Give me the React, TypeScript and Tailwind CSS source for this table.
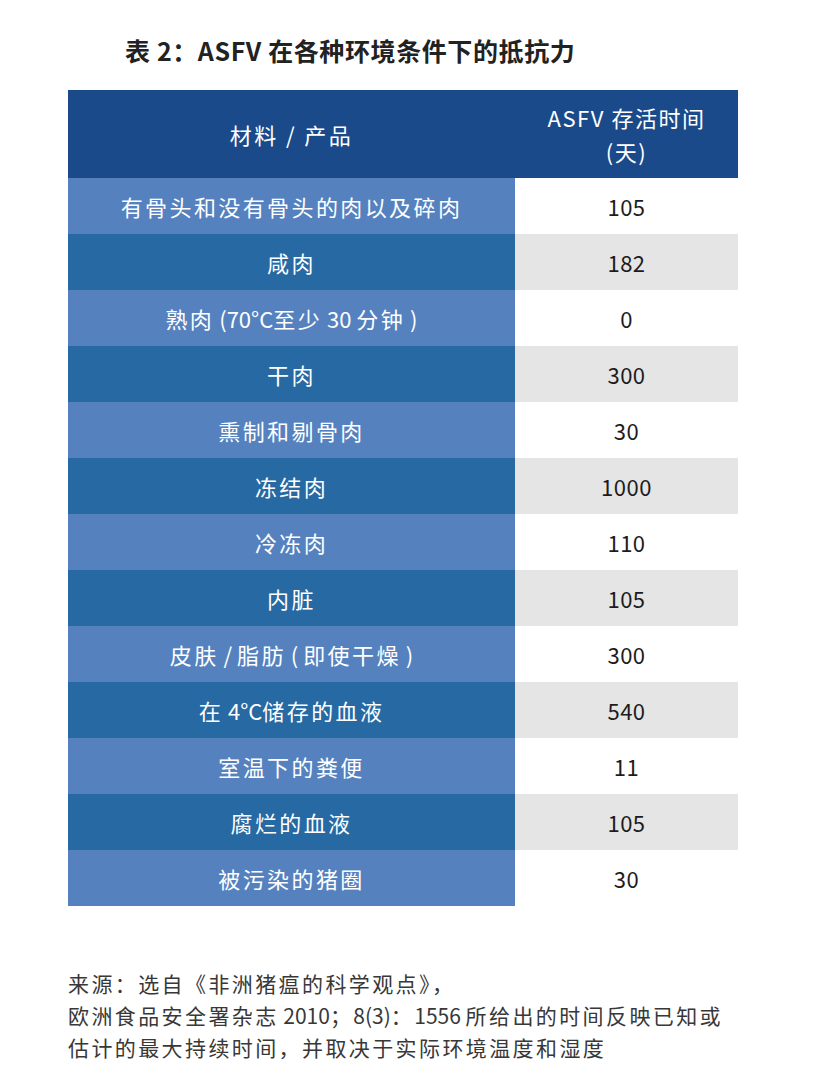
import React from 'react';

interface Row {
  material: string;
  days: string;
}

const rows: Row[] = [
  { material: '有骨头和没有骨头的肉以及碎肉', days: '105' },
  { material: '咸肉', days: '182' },
  { material: '熟肉 (70°C至少 30 分钟 )', days: '0' },
  { material: '干肉', days: '300' },
  { material: '熏制和剔骨肉', days: '30' },
  { material: '冻结肉', days: '1000' },
  { material: '冷冻肉', days: '110' },
  { material: '内脏', days: '105' },
  { material: '皮肤 / 脂肪 ( 即使干燥 )', days: '300' },
  { material: '在 4°C储存的血液', days: '540' },
  { material: '室温下的粪便', days: '11' },
  { material: '腐烂的血液', days: '105' },
  { material: '被污染的猪圈', days: '30' },
];

// latin runs get no extra letter spacing, CJK keeps the wide tracking
const Mixed: React.FC<{ text: string }> = ({ text }) => (
  <>
    {text.split(/([\x20-\x7E°]+)/).map((part, i) =>
      /^[\x20-\x7E°]+$/.test(part) ? (
        <span key={i} className="tracking-normal">
          {part}
        </span>
      ) : (
        <span key={i}>{part}</span>
      )
    )}
  </>
);

const App: React.FC = () => {
  return (
    <div className="w-[826px] h-[1086px] bg-white font-['Noto_Sans_CJK_SC','Noto_Sans',sans-serif] overflow-hidden">
      <div className="pl-[68px] pt-[32px]">
        <h1 className="ml-[57px] h-[36px] leading-[36px] text-[25px] font-bold tracking-[0.6px] text-[#222]">
          表 2：ASFV 在各种环境条件下的抵抗力
        </h1>

        <div className="mt-[22px] w-[670px] grid grid-cols-[447px_223px] text-[22px] tracking-[2.4px]">
          {/* header */}
          <div className="h-[88px] bg-[#1b4a8b] text-white flex items-center justify-center">
            材料 / 产品
          </div>
          <div className="h-[88px] bg-[#1b4a8b] text-white flex flex-col items-center justify-center leading-[34px] tracking-[1.5px]">
            <span>ASFV 存活时间</span>
            <span>(天)</span>
          </div>

          {rows.map((row, i) => {
            const odd = i % 2 === 0;
            return (
              <React.Fragment key={i}>
                <div
                  className={`h-[56px] flex items-center justify-center text-white ${
                    odd ? 'bg-[#5582bf]' : 'bg-[#2769a2]'
                  }`}
                >
                  <span>
                    <Mixed text={row.material} />
                  </span>
                </div>
                <div
                  className={`h-[56px] flex items-center justify-center text-[#1c1c1c] tracking-[0.5px] ${
                    odd ? 'bg-white' : 'bg-[#e5e5e5]'
                  }`}
                >
                  {row.days}
                </div>
              </React.Fragment>
            );
          })}
        </div>

        <p className="mt-[61px] text-[21px] leading-[32px] tracking-[2.4px] text-[#383838]">
          来源：选自《非洲猪瘟的科学观点》，
          <br />
          <Mixed text="欧洲食品安全署杂志 2010；8(3)：1556 所给出的时间反映已知或" />
          <br />
          估计的最大持续时间，并取决于实际环境温度和湿度
        </p>
      </div>
    </div>
  );
};

export default App;
